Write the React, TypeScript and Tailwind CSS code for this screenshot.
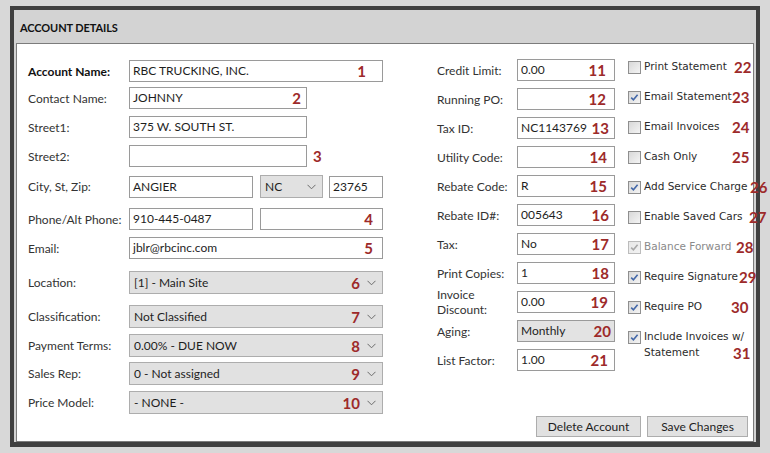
import React from "react";

const FONT = { fontFamily: "Lato, 'Open Sans', sans-serif" };
const CBFONT = { fontFamily: "'DejaVu Sans', Verdana, sans-serif" };

function Num({ n, className }: { n: string; className: string }) {
  return (
    <span
      className={`absolute top-1/2 -translate-y-1/2 text-[15px] font-bold leading-none text-[#9d2a2a] ${className}`}
      style={FONT}
    >
      {n}
    </span>
  );
}

function Chevron() {
  return (
    <svg width="9" height="6" viewBox="0 0 9 6" className="absolute right-[6px] top-1/2 -translate-y-1/2">
      <polyline points="0.5,0.8 4.5,4.8 8.5,0.8" fill="none" stroke="#6b6b6b" strokeWidth="1" />
    </svg>
  );
}

function TextBox({
  value,
  w,
  num,
  numPos,
  gray,
}: {
  value?: string;
  w: string;
  num?: string;
  numPos?: string;
  gray?: boolean;
}) {
  return (
    <div
      className={`relative h-[22px] ${w} border border-[#9a9a9a] ${gray ? "bg-[#e3e3e3]" : "bg-white"} flex items-center px-[3px] text-[12px] text-[#1e1e1e]`}
      style={FONT}
    >
      <span className="whitespace-nowrap">{value}</span>
      {num && <Num n={num} className={numPos ?? "right-[8px]"} />}
    </div>
  );
}

function SelectBox({ value, w, num }: { value: string; w: string; num?: string }) {
  return (
    <div
      className={`relative h-[23px] ${w} border border-[#adadad] bg-[#e1e1e1] flex items-center px-[4px] text-[12px] text-[#1e1e1e]`}
      style={FONT}
    >
      <span className="whitespace-nowrap">{value}</span>
      {num && <Num n={num} className="right-[22px]" />}
      <Chevron />
    </div>
  );
}

function Label({ children, bold, w }: { children: React.ReactNode; bold?: boolean; w: string }) {
  return (
    <div
      className={`${w} shrink-0 text-[12px] leading-[15px] ${bold ? "font-bold text-[#111]" : "text-[#333]"}`}
      style={FONT}
    >
      {children}
    </div>
  );
}

function CheckBox({ checked, disabled }: { checked?: boolean; disabled?: boolean }) {
  return (
    <div
      className={`relative w-[13px] h-[13px] shrink-0 border ${disabled ? "border-[#bcbcbc]" : "border-[#8f8f8f]"} bg-gradient-to-br ${disabled ? "from-[#e8e8e8] to-[#f2f2f2]" : "from-[#d8d8d8] to-[#f4f4f4]"}`}
    >
      {checked && (
        <svg width="11" height="11" viewBox="0 0 11 11" className="absolute left-0 top-0">
          <polyline
            points="2.2,5.6 4.4,7.8 8.6,2.8"
            fill="none"
            stroke={disabled ? "#a8a8a8" : "#4468a8"}
            strokeWidth="1.6"
          />
        </svg>
      )}
    </div>
  );
}

function CbRow({
  label,
  checked,
  disabled,
  num,
  numLeft,
  second,
}: {
  label: string;
  checked?: boolean;
  disabled?: boolean;
  num: string;
  numLeft: string;
  second?: string;
}) {
  return (
    <div className="relative">
      <div className="flex items-center h-[16px] gap-[3px]">
        <CheckBox checked={checked} disabled={disabled} />
        <span
          className={`text-[10.5px] whitespace-nowrap ${disabled ? "text-[#8a8a8a]" : "text-[#2b2b2b]"}`}
          style={CBFONT}
        >
          {label}
        </span>
        {!second && <Num n={num} className={numLeft} />}
      </div>
      {second && (
        <div className="relative flex items-center h-[15px] pl-[16px]">
          <span className="text-[10.5px] whitespace-nowrap text-[#2b2b2b]" style={CBFONT}>
            {second}
          </span>
          <Num n={num} className={numLeft} />
        </div>
      )}
    </div>
  );
}

function MidRow({ label, children }: { label: React.ReactNode; children: React.ReactNode }) {
  return (
    <div className="flex items-center h-[22px]">
      <Label w="w-[80px]">{label}</Label>
      {children}
    </div>
  );
}

export default function App() {
  const lw = "w-[101px]";
  return (
    <div className="w-[770px] h-[453px] bg-[#d8d8d8] pt-[6px] pl-[10px] overflow-hidden">
      <div className="w-[750px] h-[441px] border-[4px] border-b-[5px] border-[#404040] bg-[#d3d3d3] flex flex-col">
        <div className="h-[33px] shrink-0 flex items-center pl-[6px] pt-[3px]">
          <span className="text-[11px] font-bold text-[#111] tracking-[-0.1px]" style={FONT}>
            ACCOUNT DETAILS
          </span>
        </div>
        <div className="relative mx-[2px] flex-1 border border-[#7c7c7c] bg-white flex flex-col">
          <div className="flex pt-[15px] pl-[11px]">
            {/* Left column */}
            <div className="w-[355px] flex flex-col mt-[1px]">
              <div className="flex items-center">
                <Label bold w={lw}>Account Name:</Label>
                <TextBox value="RBC TRUCKING, INC." w="w-[254px]" num="1" numPos="right-[16px]" />
              </div>
              <div className="flex items-center mt-[5px]">
                <Label w={lw}>Contact Name:</Label>
                <TextBox value="JOHNNY" w="w-[178px]" num="2" numPos="right-[5px]" />
              </div>
              <div className="flex items-center mt-[7px]">
                <Label w={lw}>Street1:</Label>
                <TextBox value="375 W. SOUTH ST." w="w-[178px]" />
              </div>
              <div className="flex items-center mt-[7px]">
                <Label w={lw}>Street2:</Label>
                <TextBox value="" w="w-[178px]" />
                <span className="ml-[6px] text-[15px] font-bold leading-none text-[#9d2a2a]" style={FONT}>
                  3
                </span>
              </div>
              <div className="flex items-center mt-[8px]">
                <Label w={lw}>City, St, Zip:</Label>
                <TextBox value="ANGIER" w="w-[124px]" />
                <div className="ml-[7px]">
                  <SelectBox value="NC" w="w-[63px]" />
                </div>
                <div className="ml-[6px]">
                  <TextBox value="23765" w="w-[54px]" />
                </div>
              </div>
              <div className="flex items-center mt-[10px]">
                <Label w={lw}>Phone/Alt Phone:</Label>
                <TextBox value="910-445-0487" w="w-[124px]" />
                <div className="ml-[7px]">
                  <TextBox value="" w="w-[123px]" num="4" numPos="right-[9px]" />
                </div>
              </div>
              <div className="flex items-center mt-[7px]">
                <Label w={lw}>Email:</Label>
                <TextBox value="jblr@rbcinc.com" w="w-[254px]" num="5" numPos="right-[9px]" />
              </div>
              <div className="flex items-center mt-[12px]">
                <Label w={lw}>Location:</Label>
                <SelectBox value="[1] - Main Site" w="w-[254px]" num="6" />
              </div>
              <div className="flex items-center mt-[11px]">
                <Label w={lw}>Classification:</Label>
                <SelectBox value="Not Classified" w="w-[254px]" num="7" />
              </div>
              <div className="flex items-center mt-[6px]">
                <Label w={lw}>Payment Terms:</Label>
                <SelectBox value="0.00% - DUE NOW" w="w-[254px]" num="8" />
              </div>
              <div className="flex items-center mt-[5px]">
                <Label w={lw}>Sales Rep:</Label>
                <SelectBox value="0 - Not assigned" w="w-[254px]" num="9" />
              </div>
              <div className="flex items-center mt-[6px]">
                <Label w={lw}>Price Model:</Label>
                <SelectBox value="- NONE -" w="w-[254px]" num="10" />
              </div>
            </div>

            {/* Middle column */}
            <div className="ml-[54px] w-[178px] flex flex-col gap-[7px]">
              <MidRow label="Credit Limit:">
                <TextBox value="0.00" w="w-[98px]" num="11" />
              </MidRow>
              <MidRow label="Running PO:">
                <TextBox value="" w="w-[98px]" num="12" />
              </MidRow>
              <MidRow label="Tax ID:">
                <TextBox value="NC1143769" w="w-[98px]" num="13" numPos="right-[5px]" />
              </MidRow>
              <MidRow label="Utility Code:">
                <TextBox value="" w="w-[98px]" num="14" numPos="right-[7px]" />
              </MidRow>
              <MidRow label="Rebate Code:">
                <TextBox value="R" w="w-[98px]" num="15" numPos="right-[7px]" />
              </MidRow>
              <MidRow label="Rebate ID#:">
                <TextBox value="005643" w="w-[98px]" num="16" numPos="right-[5px]" />
              </MidRow>
              <MidRow label="Tax:">
                <TextBox value="No" w="w-[98px]" num="17" numPos="right-[5px]" />
              </MidRow>
              <MidRow label="Print Copies:">
                <TextBox value="1" w="w-[98px]" num="18" numPos="right-[5px]" />
              </MidRow>
              <MidRow
                label={
                  <>
                    Invoice
                    <br />
                    Discount:
                  </>
                }
              >
                <TextBox value="0.00" w="w-[98px]" num="19" numPos="right-[6px]" />
              </MidRow>
              <MidRow label="Aging:">
                <TextBox value="Monthly" w="w-[98px]" num="20" numPos="right-[3px]" gray />
              </MidRow>
              <MidRow label="List Factor:">
                <TextBox value="1.00" w="w-[98px]" num="21" numPos="right-[6px]" />
              </MidRow>
            </div>

            {/* Checkbox column */}
            <div className="ml-[13px] flex flex-col gap-[14px]">
              <CbRow label="Print Statement" num="22" numLeft="left-[106px]" />
              <CbRow label="Email Statement" checked num="23" numLeft="left-[104px]" />
              <CbRow label="Email Invoices" num="24" numLeft="left-[104px]" />
              <CbRow label="Cash Only" num="25" numLeft="left-[104px]" />
              <CbRow label="Add Service Charge" checked num="26" numLeft="left-[122px]" />
              <CbRow label="Enable Saved Cars" num="27" numLeft="left-[121px]" />
              <CbRow label="Balance Forward" checked disabled num="28" numLeft="left-[108px]" />
              <CbRow label="Require Signature" checked num="29" numLeft="left-[111px]" />
              <CbRow label="Require PO" checked num="30" numLeft="left-[103px]" />
              <CbRow
                label="Include Invoices w/"
                second="Statement"
                checked
                num="31"
                numLeft="left-[105px]"
              />
            </div>
          </div>

          <div className="mt-auto flex justify-end gap-[6px] pr-[5px] pb-[4px]">
            <button
              className="w-[105px] h-[21px] border border-[#adadad] bg-[#e1e1e1] text-[12px] text-[#1e1e1e]"
              style={FONT}
            >
              Delete Account
            </button>
            <button
              className="w-[101px] h-[21px] border border-[#adadad] bg-[#e1e1e1] text-[12px] text-[#1e1e1e]"
              style={FONT}
            >
              Save Changes
            </button>
          </div>
        </div>
      </div>
    </div>
  );
}
